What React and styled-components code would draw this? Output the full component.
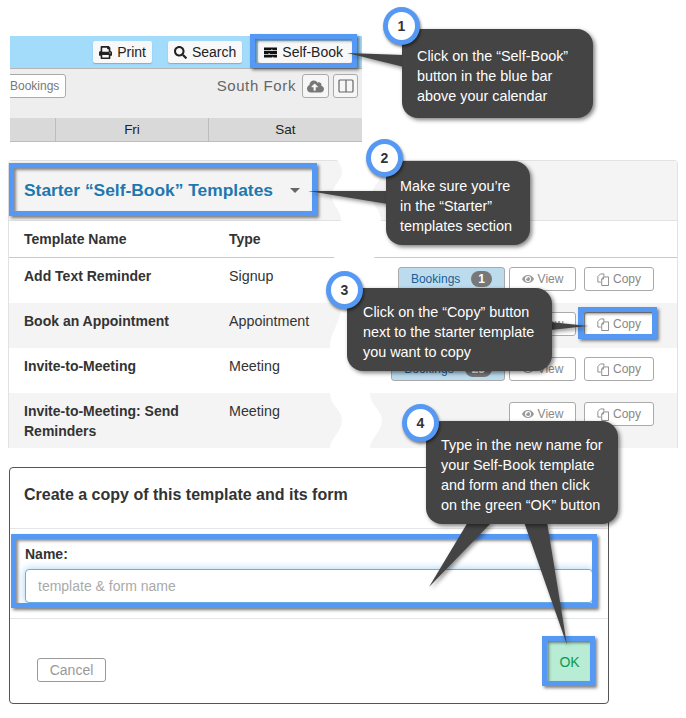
import styled, { createGlobalStyle } from "styled-components";
import { FaPrint, FaSearch, FaEye, FaCloudUploadAlt } from "react-icons/fa";

const GlobalStyle = createGlobalStyle`
  html, body {
    margin: 0;
    padding: 0;
    background: #fff;
  }
  body {
    font-family: "Liberation Sans", Arial, sans-serif;
    font-size: 14px;
    color: #333;
  }
`;

const Page = styled.div`
  position: relative;
  width: 686px;
  height: 718px;
  padding-top: 36px;
  box-sizing: border-box;
  overflow: hidden;
`;

/* calendar excerpt */
const Calendar = styled.section`
  width: 352px;
  margin-left: 10px;
`;

const BlueBar = styled.div`
  display: flex;
  justify-content: flex-end;
  align-items: center;
  gap: 16px;
  height: 33px;
  padding-right: 10px;
  background: #a3dbfb;
  border-bottom: 1px solid #b5b5b5;
  box-sizing: border-box;
`;

const BarButton = styled.button`
  display: flex;
  align-items: center;
  gap: 5px;
  height: 22px;
  padding: 0 6px;
  border: none;
  border-radius: 2px;
  background: #f8f8f8;
  font: 14px "Liberation Sans", Arial, sans-serif;
  color: #222;
  box-shadow: 0 1px 1px rgba(0, 0, 0, 0.2);
  svg {
    font-size: 13px;
  }
  &:last-child {
    padding-right: 9px;
  }
`;

const Toolbar = styled.div`
  display: flex;
  align-items: flex-start;
  height: 49px;
  padding: 5px 4px 0 0;
  background: #eeeeee;
  box-sizing: border-box;
  overflow: hidden;
`;

const SmallButton = styled.button`
  display: flex;
  align-items: center;
  justify-content: center;
  gap: 4px;
  height: 24px;
  padding: 0 6px;
  border: 1px solid #aaa;
  border-radius: 3px;
  background: #fff;
  font: 12px "Liberation Sans", Arial, sans-serif;
  color: #888;
  box-sizing: border-box;
  flex: none;
`;

const CutBookings = styled(SmallButton)`
  margin-left: -7px;
  color: #777;
`;

const LocationName = styled.span`
  margin-left: auto;
  margin-right: 6px;
  line-height: 24px;
  font-size: 15px;
  letter-spacing: 0.6px;
  color: #666;
`;

const IconButton = styled(SmallButton)`
  width: ${(p) => p.$w}px;
  margin-right: ${(p) => p.$gap ?? 0}px;
  padding: 0;
  color: #666;
  background: #f6f6f6;
`;

const DaysRow = styled.div`
  display: grid;
  grid-template-columns: 46px 153px 153px;
  height: 24px;
  background: #d9d9d9;
  border-bottom: 1px solid #bdbdbd;
  box-sizing: border-box;
`;

const DayCell = styled.div`
  text-align: center;
  line-height: 23px;
  font-size: 13.5px;
  color: #222;
  border-right: 1px solid #bdbdbd;
  &:last-child {
    border-right: none;
  }
`;

/* templates excerpt */
const Panel = styled.section`
  width: 670px;
  margin: 18px 0 0 8px;
  border: 1px solid #e2e2e2;
  border-bottom: none;
  border-radius: 4px 4px 0 0;
  box-sizing: border-box;
`;

const PanelHeader = styled.div`
  display: flex;
  align-items: center;
  height: 60px;
  padding-left: 15px;
  background: #f4f4f4;
  border-bottom: 1px solid #e2e2e2;
  box-sizing: border-box;
`;

const PanelTitle = styled.h2`
  margin: 0;
  font-size: 17.4px;
  font-weight: 700;
  color: #1e78b0;
`;

const Caret = styled.span`
  width: 0;
  height: 0;
  margin-left: 17px;
  border-left: 5.5px solid transparent;
  border-right: 5.5px solid transparent;
  border-top: 5.5px solid #666;
`;

const TableRow = styled.div`
  display: grid;
  grid-template-columns: 205px 100px 1fr;
  padding: 8px 23px 0 15px;
  min-height: ${(p) => p.$height ?? 45}px;
  box-sizing: border-box;
  line-height: 20px;
  background: ${(p) => (p.$shaded ? "#f4f4f4" : "#fff")};
`;

const HeadRow = styled(TableRow)`
  min-height: 37px;
  font-weight: 700;
  border-bottom: 1px solid #c9c9c9;
`;

const NameCell = styled.div`
  font-weight: 700;
  padding-right: 15px;
`;

const TypeCell = styled.div`
  font-size: 14.3px;
`;

const Actions = styled.div`
  display: flex;
  justify-content: flex-end;
  gap: 8px;
  margin-top: 1px;
`;

const BookingsButton = styled(SmallButton)`
  gap: 11px;
  margin-right: -4px;
  padding: 0 12px;
  background: #bcdcee;
  color: #1d5c94;
`;

const Count = styled.span`
  padding: 0 7px;
  height: 16px;
  line-height: 16px;
  border-radius: 8px;
  background: #777;
  color: #fff;
  font-weight: 700;
  font-size: 12px;
`;

const ActionButton = styled(SmallButton)`
  width: ${(p) => p.$w}px;
  svg {
    color: #999;
  }
`;

/* dialog excerpt */
const Dialog = styled.section`
  width: 600px;
  height: 237px;
  margin: 19px 0 0 9px;
  border: 1px solid #555;
  border-radius: 4px;
  box-sizing: border-box;
  display: flex;
  flex-direction: column;
  background: #fff;
`;

const DialogTitle = styled.h3`
  margin: 0;
  height: 61px;
  padding: 17px 15px 0 14px;
  font-size: 16px;
  line-height: 20px;
  font-weight: 700;
  color: #333;
  border-bottom: 1px solid #e5e5e5;
  box-sizing: border-box;
`;

const DialogBody = styled.div`
  height: 90px;
  padding: 15px 15px 0;
  border-bottom: 1px solid #e5e5e5;
  box-sizing: border-box;
`;

const FieldLabel = styled.label`
  display: block;
  margin-bottom: 5px;
  font-weight: 700;
  line-height: 20px;
`;

const NameInput = styled.input`
  display: block;
  width: 100%;
  height: 34px;
  padding: 0 12px;
  border: 1px solid #66afe9;
  border-radius: 4px;
  box-shadow: 0 0 8px rgba(102, 175, 233, 0.6);
  font: 14px "Liberation Sans", Arial, sans-serif;
  box-sizing: border-box;
  outline: none;
  &::placeholder {
    color: #aaa;
  }
`;

const DialogFooter = styled.div`
  flex: 1;
  display: flex;
  justify-content: space-between;
  align-items: flex-end;
  padding: 0 17px 21px 27px;
`;

const CancelButton = styled(SmallButton)`
  width: 69px;
  font-size: 14px;
  color: #999;
  border-color: #999;
`;

const OkButton = styled.button`
  width: 43px;
  height: 41px;
  border: none;
  background: #b8ecd4;
  color: #0b9a55;
  font: 14px "Liberation Sans", Arial, sans-serif;
`;

/* annotations, laid over the screenshots */
const Overlay = styled.svg`
  position: absolute;
  left: 0;
  top: 0;
  pointer-events: none;
`;

const Highlight = styled.div`
  position: absolute;
  left: ${(p) => p.$x}px;
  top: ${(p) => p.$y}px;
  width: ${(p) => p.$w}px;
  height: ${(p) => p.$h}px;
  border: 5px solid #5599f5;
  box-sizing: border-box;
  box-shadow: 2px 2px 3px rgba(0, 0, 0, 0.5), inset 2px 2px 3px rgba(0, 0, 0, 0.45);
`;

const Callout = styled.div`
  position: absolute;
  left: ${(p) => p.$x}px;
  top: ${(p) => p.$y}px;
  width: ${(p) => p.$w}px;
  height: ${(p) => p.$h}px;
  padding: ${(p) => p.$pt}px 0 0 ${(p) => p.$pl}px;
  border-radius: 16px;
  background: #444;
  box-shadow: 2px 2px 4px rgba(0, 0, 0, 0.5);
  color: #fff;
  font-size: 14.4px;
  line-height: 20px;
  white-space: pre-line;
  box-sizing: border-box;
`;

const StepBadge = styled.div`
  position: absolute;
  left: ${(p) => p.$x}px;
  top: ${(p) => p.$y}px;
  width: 37px;
  height: 38px;
  border: 5px solid #5599f5;
  border-radius: 50%;
  background: #fff;
  box-shadow: 1px 2px 3px rgba(0, 0, 0, 0.5);
  font-size: 14px;
  font-weight: 700;
  line-height: 28px;
  text-align: center;
  color: #333;
  box-sizing: border-box;
`;

const highlights = [
  { x: 250, y: 34, w: 107, h: 34 },
  { x: 9, y: 163, w: 308, h: 53 },
  { x: 578, y: 307, w: 79, h: 32 },
  { x: 11, y: 534, w: 586, h: 74 },
  { x: 542, y: 636, w: 53, h: 50 },
];

const tails = [
  "347,53 404,55 404,67",
  "308,191 388,191 388,204",
  "550,322 588,326 550,330",
  "468,522 492,522 429,587",
  "524,522 547,522 567,645",
];

const callouts = [
  { x: 402, y: 29, w: 191, h: 89, pt: 17, pl: 15, text: "Click on the “Self-Book”\nbutton in the blue bar\nabove your calendar" },
  { x: 386, y: 161, w: 144, h: 84, pt: 15, pl: 14, text: "Make sure you’re\nin the “Starter”\ntemplates section" },
  { x: 347, y: 288, w: 205, h: 83, pt: 14, pl: 16, text: "Click on the “Copy” button\nnext to the starter template\nyou want to copy" },
  { x: 426, y: 421, w: 192, h: 103, pt: 14, pl: 15, text: "Type in the new name for\nyour Self-Book template\nand form and then click\non the green “OK” button" },
];

const badges = [
  { x: 383, y: 7, n: 1 },
  { x: 366, y: 139, n: 2 },
  { x: 326, y: 271, n: 3 },
  { x: 402, y: 404, n: 4 },
];

const rows = [
  { name: "Add Text Reminder", type: "Signup", count: "1" },
  { name: "Book an Appointment", type: "Appointment", shaded: true },
  { name: "Invite-to-Meeting", type: "Meeting", count: "23" },
  { name: "Invite-to-Meeting: Send Reminders", type: "Meeting", shaded: true, height: 55 },
];

function SelfBookIcon() {
  return (
    <svg width="13" height="11" viewBox="0 0 14 11">
      <path d="M0 0h14v3H9V2H8v1H0zM0 4h14v3H6V6H5v1H0zM0 8h14v3H10v-1H9v1H0z" fill="#111" />
    </svg>
  );
}

function CopyIcon() {
  return (
    <svg width="12" height="13" viewBox="0 0 14 15" fill="none" stroke="#888" strokeWidth="1.1">
      <path d="M4.5 10.5H1V4l3-3h4v3" />
      <path d="M7.5 4.5h6v10h-8V7z" fill="#fff" />
      <path d="M7.5 4.5V7h-2" />
    </svg>
  );
}

function ColumnsIcon() {
  return (
    <svg width="16" height="14" viewBox="0 0 16 14" fill="none" stroke="#666" strokeWidth="1.2">
      <rect x="1" y="1" width="14" height="12" rx="1" />
      <path d="M8 1v12" />
    </svg>
  );
}

function TornEdge() {
  // white band where the screenshot was cut to bring the columns closer
  const left =
    "M337 160 C341 165 342 168 342 172 C342 180 332 186 332 195 C332 206 341 210 341 220 C341 232 333 238 333 250 C333 262 342 266 342 278 C342 288 340 296 340 303 C344 318 330 332 330 346 C330 358 342 362 342 368 C342 376 330 384 330 393 C330 405 342 410 342 420 C342 432 330 438 330 448";
  const right =
    "L370 448 C370 438 382 432 382 420 C382 410 370 405 370 393 C370 384 382 376 382 368 C382 362 370 358 370 346 C370 332 384 318 380 303 C380 296 382 288 382 278 C382 266 373 262 373 250 C373 238 381 232 381 220 C381 210 372 206 372 195 C372 186 382 180 382 172 C382 168 381 165 377 160 Z";
  return (
    <Overlay width="686" height="718">
      <path d={`${left} ${right}`} fill="#fff" />
    </Overlay>
  );
}

function Tails() {
  return (
    <Overlay width="686" height="718" style={{ filter: "drop-shadow(2px 2px 2px rgba(0,0,0,0.45))" }}>
      {tails.map((points) => (
        <polygon key={points} points={points} fill="#444" />
      ))}
    </Overlay>
  );
}

function App() {
  return (
    <Page>
      <GlobalStyle />
      <Calendar>
        <BlueBar>
          <BarButton>
            <FaPrint />
            Print
          </BarButton>
          <BarButton>
            <FaSearch />
            Search
          </BarButton>
          <BarButton>
            <SelfBookIcon />
            Self-Book
          </BarButton>
        </BlueBar>
        <Toolbar>
          <CutBookings>Bookings</CutBookings>
          <LocationName>South Fork</LocationName>
          <IconButton $w={27} $gap={4}>
            <FaCloudUploadAlt size={17} color="#777" />
          </IconButton>
          <IconButton $w={25}>
            <ColumnsIcon />
          </IconButton>
        </Toolbar>
        <DaysRow>
          <DayCell />
          <DayCell>Fri</DayCell>
          <DayCell>Sat</DayCell>
        </DaysRow>
      </Calendar>

      <Panel>
        <PanelHeader>
          <PanelTitle>Starter “Self-Book” Templates</PanelTitle>
          <Caret />
        </PanelHeader>
        <HeadRow>
          <div>Template Name</div>
          <div>Type</div>
        </HeadRow>
        {rows.map((row) => (
          <TableRow key={row.name} $shaded={row.shaded} $height={row.height}>
            <NameCell>{row.name}</NameCell>
            <TypeCell>{row.type}</TypeCell>
            <Actions>
              {row.count && (
                <BookingsButton>
                  Bookings
                  <Count>{row.count}</Count>
                </BookingsButton>
              )}
              <ActionButton $w={67}>
                <FaEye size={12} />
                View
              </ActionButton>
              <ActionButton $w={70}>
                <CopyIcon />
                Copy
              </ActionButton>
            </Actions>
          </TableRow>
        ))}
      </Panel>

      <Dialog>
        <DialogTitle>Create a copy of this template and its form</DialogTitle>
        <DialogBody>
          <FieldLabel htmlFor="template-name">Name:</FieldLabel>
          <NameInput id="template-name" placeholder="template & form name" readOnly />
        </DialogBody>
        <DialogFooter>
          <CancelButton>Cancel</CancelButton>
          <OkButton>OK</OkButton>
        </DialogFooter>
      </Dialog>

      <TornEdge />
      {highlights.map((h) => (
        <Highlight key={`${h.x}-${h.y}`} $x={h.x} $y={h.y} $w={h.w} $h={h.h} />
      ))}
      <Tails />
      {callouts.map((c) => (
        <Callout key={c.y} $x={c.x} $y={c.y} $w={c.w} $h={c.h} $pt={c.pt} $pl={c.pl}>
          {c.text}
        </Callout>
      ))}
      {badges.map((b) => (
        <StepBadge key={b.n} $x={b.x} $y={b.y}>
          {b.n}
        </StepBadge>
      ))}
    </Page>
  );
}

export default App;
